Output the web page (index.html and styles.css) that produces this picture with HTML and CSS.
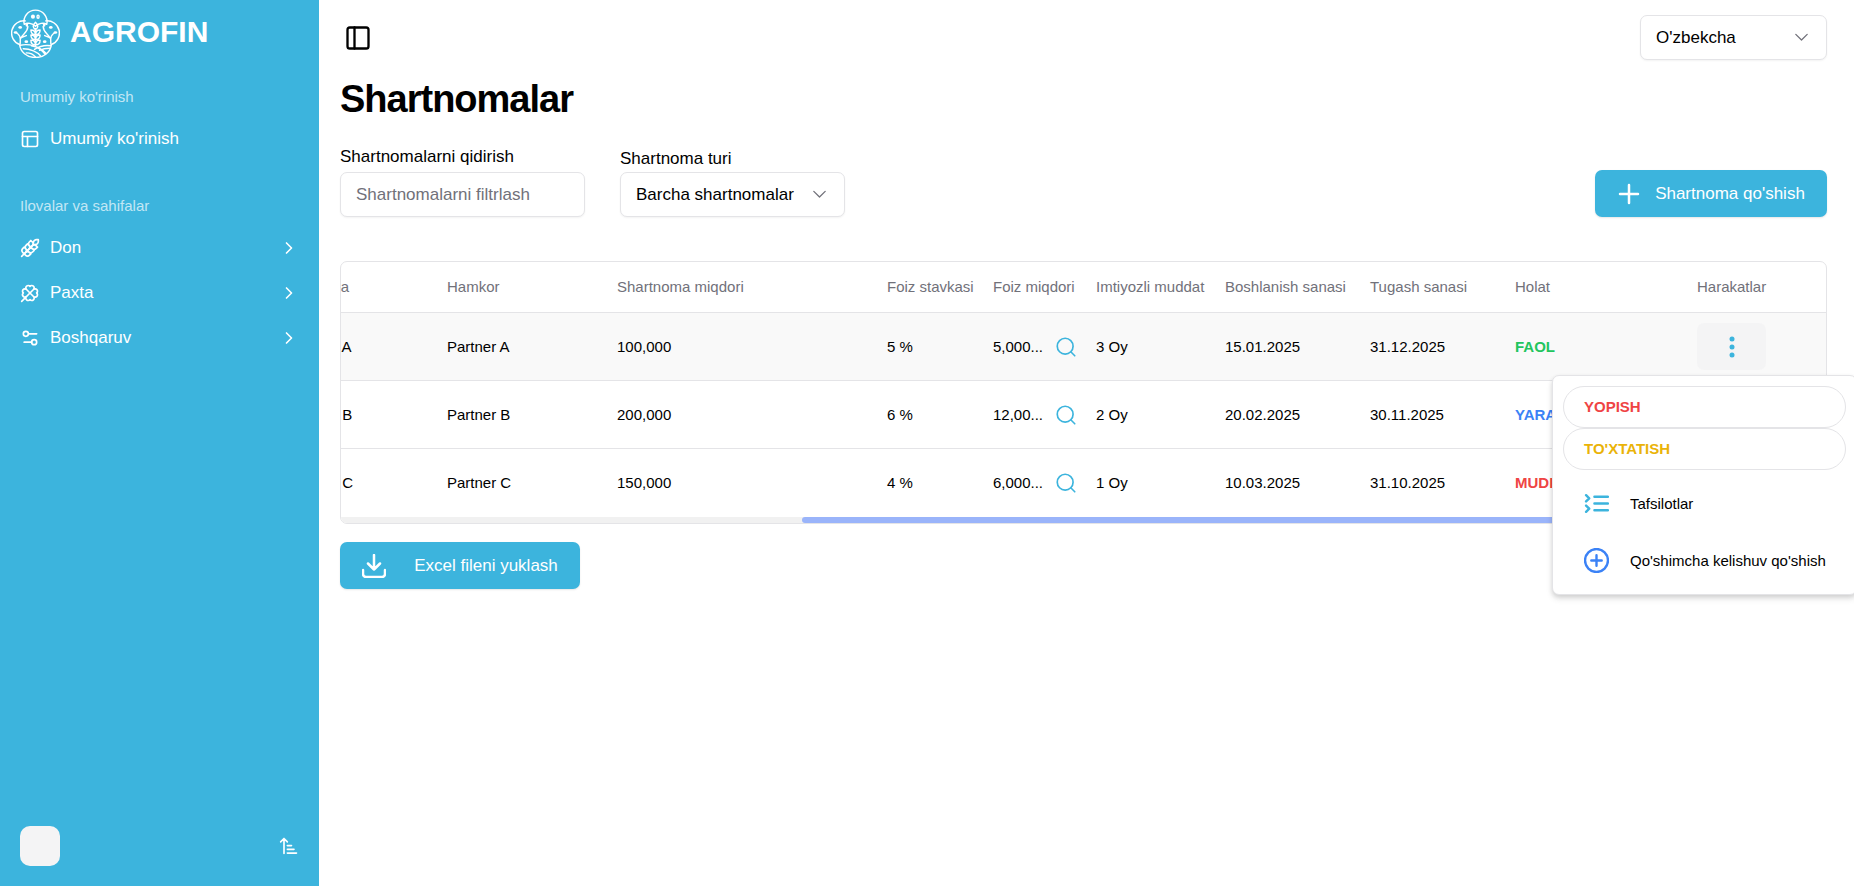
FILE: index.html
```
<!DOCTYPE html>
<html lang="uz">
<head>
    <meta charset="UTF-8">
    <meta name="viewport" content="width=device-width, initial-scale=1.0">
    <title>Shartnomalar</title>
    <link rel="stylesheet" href="styles.css">
</head>
<body>
    <!-- Shared icons -->
    <svg class="sprite" xmlns="http://www.w3.org/2000/svg">
        <symbol id="chevron-right" viewBox="0 0 24 24"><path d="m9 18 6-6-6-6"/></symbol>
        <symbol id="chevron-down" viewBox="0 0 15 15"><path d="m3 5 4.5 4.5L12 5"/></symbol>
        <symbol id="search" viewBox="0 0 24 24"><circle cx="11" cy="11" r="9.500"/><path d="m18 18 4.500 4.500"/></symbol>
        <symbol id="dots" viewBox="0 0 24 24"><circle cx="12" cy="4" r="2.500"/><circle cx="12" cy="12" r="2.500"/><circle cx="12" cy="20" r="2.500"/></symbol>
    </svg>

    <aside class="sidebar">
        <div class="logo">
            <svg class="logo-mark" viewBox="0 0 48 48">
                <path d="M13 15a11.300 11.300 0 1 1 22 0M13 15c3-2 8-1 11 2 3-3 8-4 11-2"/>
                <path d="M14 11.600a12 12 0 0 0-5.500 23.200M34 11.600a12 12 0 0 1 5.500 23.200"/>
                <path d="M8.500 34.800C9 42 15.500 47.500 24 47.500S39 42 39.500 34.800"/>
                <path d="M9 35.500c9-2 19 1 24.500 9M20 36c7 1 11 4 14.500 7.500M39 36c-6-1-12 1-16 3.500M38 38.500c-5 0-8 1-10 2M12 39c7 0 14 3 17 7M15 43c4 0 7 1.500 9 4"/>
                <path d="M24 36V19M24 13c3 3 3 5 0 7.500c-3-2.500-3-4.500 0-7.500z"/>
                <path d="M24 25c-3 0-4.500-1.500-4.500-4.500 3 0 4.500 1.500 4.500 4.500zm0 0c3 0 4.500-1.500 4.500-4.500-3 0-4.500 1.500-4.500 4.500zM24 30c-3 0-4.500-1.500-4.500-4.500 3 0 4.500 1.500 4.500 4.500zm0 0c3 0 4.500-1.500 4.500-4.500-3 0-4.500 1.500-4.500 4.500zM24 35c-3 0-4.500-1.500-4.500-4.500 3 0 4.500 1.500 4.500 4.500zm0 0c3 0 4.500-1.500 4.500-4.500-3 0-4.500 1.500-4.500 4.500z"/>
                <path d="M9 34c1-7-1-9-4-11M9.500 29c2-5 7-6 7-12M10 28l5-2M39 34c-1-7 1-9 4-11M38.500 29c-2-5-7-6-7-12M38 28l-5-2"/>
                <g class="leaves">
                    <circle cx="21.500" cy="7.500" r="2"/>
                    <ellipse cx="9" cy="18" rx="1.800" ry="1.300"/><ellipse cx="15.500" cy="15.500" rx="1.300" ry="1.800"/>
                    <ellipse cx="4.500" cy="23" rx="1.800" ry="1.300"/><ellipse cx="15" cy="32" rx="1.800" ry="1.300"/>
                    <ellipse cx="39" cy="18" rx="1.800" ry="1.300"/><ellipse cx="32.500" cy="15.500" rx="1.300" ry="1.800"/>
                    <ellipse cx="43.500" cy="23" rx="1.800" ry="1.300"/><ellipse cx="33" cy="32" rx="1.800" ry="1.300"/>
                </g>
                <ellipse cx="26.500" cy="7.500" rx="1" ry="1.500"/>
            </svg>
            <span>AGROFIN</span>
        </div>

        <nav class="nav">
            <p class="nav-title">Umumiy ko'rinish</p>
            <a class="nav-link" href="#">
                <svg class="icon-sm" viewBox="0 0 24 24"><rect x="3" y="3" width="18" height="18" rx="2"/><path d="M3 9h18M9 21V9"/></svg>
                <span>Umumiy ko'rinish</span>
            </a>
        </nav>

        <nav class="nav">
            <p class="nav-title">Ilovalar va sahifalar</p>
            <a class="nav-link" href="#">
                <svg class="icon-sm" viewBox="0 0 24 24"><path d="M2 22 16 8"/><path d="M3.470 12.530 5 11l1.530 1.530a3.500 3.500 0 0 1 0 4.940L5 19l-1.530-1.530a3.500 3.500 0 0 1 0-4.940ZM7.470 8.530 9 7l1.530 1.530a3.500 3.500 0 0 1 0 4.940L9 15l-1.530-1.530a3.500 3.500 0 0 1 0-4.940ZM11.470 4.530 13 3l1.530 1.530a3.500 3.500 0 0 1 0 4.940L13 11l-1.530-1.530a3.500 3.500 0 0 1 0-4.940ZM20 2h2v2a4 4 0 0 1-4 4h-2V6a4 4 0 0 1 4-4ZM11.470 17.470 13 19l-1.530 1.530a3.500 3.500 0 0 1-4.940 0L5 19l1.530-1.530a3.500 3.500 0 0 1 4.940 0ZM15.470 13.470 17 15l-1.530 1.530a3.500 3.500 0 0 1-4.940 0L9 15l1.530-1.530a3.500 3.500 0 0 1 4.940 0ZM19.470 9.470 21 11l-1.530 1.530a3.500 3.500 0 0 1-4.940 0L13 11l1.530-1.530a3.500 3.500 0 0 1 4.940 0Z"/></svg>
                <span>Don</span>
                <svg class="icon-sm chevron"><use href="#chevron-right"/></svg>
            </a>
            <a class="nav-link" href="#">
                <svg class="icon-sm" viewBox="0 0 24 24"><path d="M16.170 7.830 2 22M4.020 12a2.827 2.827 0 1 1 3.810-4.170A2.827 2.827 0 1 1 12 4.020a2.827 2.827 0 1 1 4.170 3.810A2.827 2.827 0 1 1 19.980 12a2.827 2.827 0 1 1-3.810 4.170A2.827 2.827 0 1 1 12 19.980a2.827 2.827 0 1 1-4.170-3.810A1 1 0 1 1 4 12M7.830 7.830l8.340 8.340"/></svg>
                <span>Paxta</span>
                <svg class="icon-sm chevron"><use href="#chevron-right"/></svg>
            </a>
            <a class="nav-link" href="#">
                <svg class="icon-sm" viewBox="0 0 24 24"><path d="M20 7h-9M14 17H5"/><circle cx="17" cy="17" r="3"/><circle cx="7" cy="7" r="3"/></svg>
                <span>Boshqaruv</span>
                <svg class="icon-sm chevron"><use href="#chevron-right"/></svg>
            </a>
        </nav>

        <div class="sidebar-footer">
            <div class="avatar"></div>
            <button class="icon-btn" type="button" aria-label="Saralash">
                <svg class="icon-sm" viewBox="0 0 24 24"><path d="m2 7 4-4 4 4M6 3v18M10 11.500h5M10 16h8M10 20.500h11"/></svg>
            </button>
        </div>
    </aside>

    <main class="content">
        <header class="topbar">
            <button class="icon-btn sidebar-toggle" type="button" aria-label="Menyu">
                <svg viewBox="0 0 24 24"><rect x="3" y="3" width="18" height="18" rx="2"/><path d="M9 3v18"/></svg>
            </button>
            <div class="select select-lang">
                <select aria-label="Til">
                    <option>O'zbekcha</option>
                </select>
                <svg><use href="#chevron-down"/></svg>
            </div>
        </header>

        <h1>Shartnomalar</h1>

        <div class="toolbar">
            <div class="field">
                <label for="search-input">Shartnomalarni qidirish</label>
                <input id="search-input" type="text" placeholder="Shartnomalarni filtrlash">
            </div>
            <div class="field field-type">
                <label for="type-select">Shartnoma turi</label>
                <div class="select">
                    <select id="type-select">
                        <option>Barcha shartnomalar</option>
                    </select>
                    <svg><use href="#chevron-down"/></svg>
                </div>
            </div>
            <button class="btn btn-add" type="button">
                <svg viewBox="0 0 24 24"><path d="M3 12h18M12 3v18"/></svg>
                Shartnoma qo'shish
            </button>
        </div>

        <div class="table-card">
            <div class="table-scroll">
                <table class="contracts">
                    <colgroup>
                        <col class="col-select">
                        <col class="col-company">
                        <col class="col-partner">
                        <col class="col-sum">
                        <col class="col-rate">
                        <col class="col-interest">
                        <col class="col-grace">
                        <col class="col-date">
                        <col class="col-date">
                        <col class="col-status">
                        <col class="col-actions">
                    </colgroup>
                    <thead>
                        <tr>
                            <th></th>
                            <th>Kompaniya</th>
                            <th>Hamkor</th>
                            <th>Shartnoma miqdori</th>
                            <th>Foiz stavkasi</th>
                            <th>Foiz miqdori</th>
                            <th>Imtiyozli muddat</th>
                            <th>Boshlanish sanasi</th>
                            <th>Tugash sanasi</th>
                            <th>Holat</th>
                            <th>Harakatlar</th>
                        </tr>
                    </thead>
                    <tbody>
                        <tr class="active">
                            <td></td>
                            <td>Company A</td>
                            <td>Partner A</td>
                            <td>100,000</td>
                            <td>5 %</td>
                            <td><div class="amount">5,000... <svg><use href="#search"/></svg></div></td>
                            <td>3 Oy</td>
                            <td>15.01.2025</td>
                            <td>31.12.2025</td>
                            <td class="status green">FAOL</td>
                            <td><button class="dots-btn" type="button" aria-label="Harakatlar"><svg><use href="#dots"/></svg></button></td>
                        </tr>
                        <tr>
                            <td></td>
                            <td>Company B</td>
                            <td>Partner B</td>
                            <td>200,000</td>
                            <td>6 %</td>
                            <td><div class="amount">12,00... <svg><use href="#search"/></svg></div></td>
                            <td>2 Oy</td>
                            <td>20.02.2025</td>
                            <td>30.11.2025</td>
                            <td class="status blue">YARATILGAN</td>
                            <td></td>
                        </tr>
                        <tr>
                            <td></td>
                            <td>Company C</td>
                            <td>Partner C</td>
                            <td>150,000</td>
                            <td>4 %</td>
                            <td><div class="amount">6,000... <svg><use href="#search"/></svg></div></td>
                            <td>1 Oy</td>
                            <td>10.03.2025</td>
                            <td>31.10.2025</td>
                            <td class="status red">MUDDATI O'TGAN</td>
                            <td></td>
                        </tr>
                    </tbody>
                </table>
            </div>
            <div class="scrollbar"><div class="thumb"></div></div>

            <div class="menu">
                <div class="menu-pills">
                    <button class="pill red" type="button">YOPISH</button>
                    <button class="pill yellow" type="button">TO'XTATISH</button>
                </div>
                <button class="menu-item" type="button">
                    <svg class="cyan" viewBox="0 0 24 24"><path d="m2 4 3 3-3 3M2 14l3 3-3 3M10 5.500h13M10 12h13M10 18.500h13"/></svg>
                    Tafsilotlar
                </button>
                <button class="menu-item" type="button">
                    <svg class="blue" viewBox="0 0 24 24"><circle cx="12" cy="12" r="11"/><path d="M7 12h10M12 7v10"/></svg>
                    Qo'shimcha kelishuv qo'shish
                </button>
            </div>
        </div>

        <button class="btn btn-excel" type="button">
            <svg viewBox="0 0 24 24"><path d="M1 16v4a3 3 0 0 0 3 3h16a3 3 0 0 0 3-3v-4M6 9.500l6 6 6-6M12 15.500V1"/></svg>
            Excel fileni yuklash
        </button>
    </main>

    <script>
        const scroller = document.querySelector('.table-scroll');
        const track = document.querySelector('.scrollbar');
        const thumb = document.querySelector('.thumb');

        function updateThumb() {
            const ratio = track.clientWidth / scroller.scrollWidth;
            thumb.style.width = ratio * 100 + '%';
            thumb.style.marginLeft = scroller.scrollLeft * ratio + 'px';
        }

        scroller.addEventListener('scroll', updateThumb);
        window.addEventListener('resize', updateThumb);
        scroller.scrollLeft = scroller.scrollWidth;
        updateThumb();
    </script>
</body>
</html>
```
FILE: styles.css
```
* {
    box-sizing: border-box;
}
html {
    overflow-x: hidden;
}
body, h1, p {
    margin: 0;
}
body {
    font-family: "Liberation Sans", Arial, sans-serif;
    font-size: 17px;
    line-height: 24px;
    color: #000;
    background-color: #fff;
    display: flex;
    min-height: 100vh;
}
button, input, select {
    font: inherit;
    color: inherit;
}
button {
    cursor: pointer;
}
svg {
    fill: none;
    stroke: currentColor;
    stroke-width: 2;
    stroke-linecap: round;
    stroke-linejoin: round;
    flex-shrink: 0;
}
.sprite {
    display: none;
}
.icon-sm {
    width: 20px;
    height: 20px;
}
.icon-btn {
    display: flex;
    padding: 0;
    border: none;
    background: none;
}

/* Sidebar */
.sidebar {
    width: 319px;
    flex-shrink: 0;
    background-color: #3cb4dd;
    color: #fff;
    display: flex;
    flex-direction: column;
}
.logo {
    display: flex;
    align-items: center;
    gap: 10px;
    padding: 9px 11px 0;
    font-size: 30px;
    font-weight: bold;
    line-height: 46px;
}
.logo span {
    align-self: flex-start;
}
.logo-mark {
    width: 49px;
    height: 49px;
    stroke-width: 1.4;
}
.leaves {
    fill: currentColor;
    stroke: none;
}
.nav {
    padding: 20px 20px 6px;
}
.nav-title {
    font-size: 15px;
    line-height: 38px;
    color: rgba(255, 255, 255, 0.7);
}
.nav-link {
    display: flex;
    align-items: center;
    gap: 10px;
    height: 45px;
    color: #fff;
    text-decoration: none;
}
.chevron {
    margin-left: auto;
}
.sidebar-footer {
    margin-top: auto;
    padding: 20px;
    display: flex;
    justify-content: space-between;
    align-items: center;
}
.avatar {
    width: 40px;
    height: 40px;
    border-radius: 10px;
    background-color: #f4f4f5;
}

/* Content */
.content {
    flex: 1;
    min-width: 0;
    padding: 15px 27px 20px 21px;
}
.topbar {
    display: flex;
    justify-content: space-between;
    align-items: center;
}
.sidebar-toggle {
    margin-left: 4px;
}
.sidebar-toggle svg {
    width: 28px;
    height: 28px;
}
h1 {
    margin-top: 15px;
    font-size: 38px;
    line-height: 48px;
    letter-spacing: -1px;
}
.toolbar {
    display: flex;
    align-items: flex-end;
    margin-top: 22px;
}
.field {
    display: flex;
    flex-direction: column;
    width: 245px;
    margin-right: 35px;
}
.field label {
    margin-bottom: 3px;
}
.field-type {
    width: 225px;
}
.field-type label {
    margin-bottom: 1px;
}
input, select {
    width: 100%;
    height: 45px;
    padding: 0 15px;
    border: 1px solid #e4e4e7;
    border-radius: 7px;
    background-color: #fff;
    box-shadow: 0 1px 2px rgba(0, 0, 0, 0.05);
}
input::placeholder {
    color: #71717a;
}
.select {
    position: relative;
}
.select select {
    appearance: none;
    display: block;
}
.select svg {
    position: absolute;
    right: 16px;
    top: 13px;
    width: 19px;
    height: 19px;
    stroke-width: 1;
    color: #71717a;
    pointer-events: none;
}
.select-lang {
    width: 187px;
}
.btn {
    display: flex;
    align-items: center;
    justify-content: center;
    height: 47px;
    padding: 0;
    border: none;
    border-radius: 7px;
    background-color: #3cb4dd;
    color: #fff;
    box-shadow: 0 1px 2px rgba(0, 0, 0, 0.1);
}
.btn svg {
    width: 24px;
    height: 24px;
    stroke-width: 2.5;
}
.btn-add {
    gap: 14px;
    width: 232px;
    margin-left: auto;
}
.btn-excel {
    gap: 28px;
    width: 240px;
    margin-top: 18px;
}

/* Table */
.table-card {
    position: relative;
    margin-top: 44px;
    border: 1px solid #e4e4e7;
    border-radius: 7px;
}
.table-scroll {
    overflow-x: auto;
    scrollbar-width: none;
    border-radius: 6px 6px 0 0;
}
.contracts {
    table-layout: fixed;
    width: 2154px;
    border-collapse: separate;
    border-spacing: 0;
    font-size: 15px;
    line-height: 20px;
}
.contracts th, .contracts td {
    padding: 0 10px;
    text-align: left;
    white-space: nowrap;
    border-bottom: 1px solid #e4e4e7;
}
.contracts th {
    height: 51px;
    font-weight: normal;
    color: #71717a;
}
.contracts td {
    height: 68px;
}
.contracts tr:last-child td {
    border-bottom-color: transparent;
}
.contracts .active {
    background-color: #f9f9f9;
}
.col-select { width: 592px; }
.col-company { width: 173px; }
.col-partner { width: 170px; }
.col-sum { width: 270px; }
.col-rate { width: 106px; }
.col-interest { width: 103px; }
.col-grace { width: 129px; }
.col-date { width: 145px; }
.col-status { width: 182px; }
.amount {
    display: flex;
    align-items: center;
    justify-content: space-between;
}
.amount svg {
    width: 20px;
    height: 20px;
    color: #3cb4dd;
}
.contracts .status {
    font-weight: bold;
}
.contracts .green { color: #22c55e; }
.red, .contracts .red { color: #ef4444; }
.blue, .contracts .blue { color: #3b82f6; }
.yellow { color: #eab308; }
.cyan { color: #3cb4dd; }
.dots-btn {
    display: flex;
    align-items: center;
    justify-content: center;
    width: 69px;
    height: 47px;
    padding: 0;
    border: none;
    border-radius: 7px;
    background-color: #f4f4f5;
}
.dots-btn svg {
    width: 24px;
    height: 24px;
    color: #3cb4dd;
    fill: currentColor;
    stroke: none;
}
.scrollbar {
    height: 6px;
    border-radius: 0 0 6px 6px;
    background-color: #f1f1f1;
    overflow: hidden;
}
.thumb {
    height: 6px;
    border-radius: 3px;
    background-color: #9ab4fa;
}

/* Row menu */
.menu {
    position: absolute;
    top: 113px;
    right: -31px;
    width: 305px;
    padding: 5px;
    border: 1px solid #e4e4e7;
    border-radius: 7px;
    background-color: #fff;
    box-shadow: 0 4px 6px rgba(0, 0, 0, 0.1), 0 2px 4px rgba(0, 0, 0, 0.1);
    font-size: 15px;
    line-height: 20px;
}
.menu-pills {
    display: flex;
    flex-direction: column;
    padding: 5px;
}
.pill {
    height: 42px;
    padding: 0 20px;
    border: 1px solid #e4e4e7;
    border-radius: 21px;
    background-color: #fff;
    font-weight: bold;
    text-align: left;
}
.menu-item {
    display: flex;
    align-items: center;
    gap: 21px;
    width: 100%;
    height: 57px;
    padding: 0 26px;
    border: none;
    background: none;
    white-space: nowrap;
}
.menu-item svg {
    width: 25px;
    height: 25px;
    stroke-width: 2.3;
}
```
